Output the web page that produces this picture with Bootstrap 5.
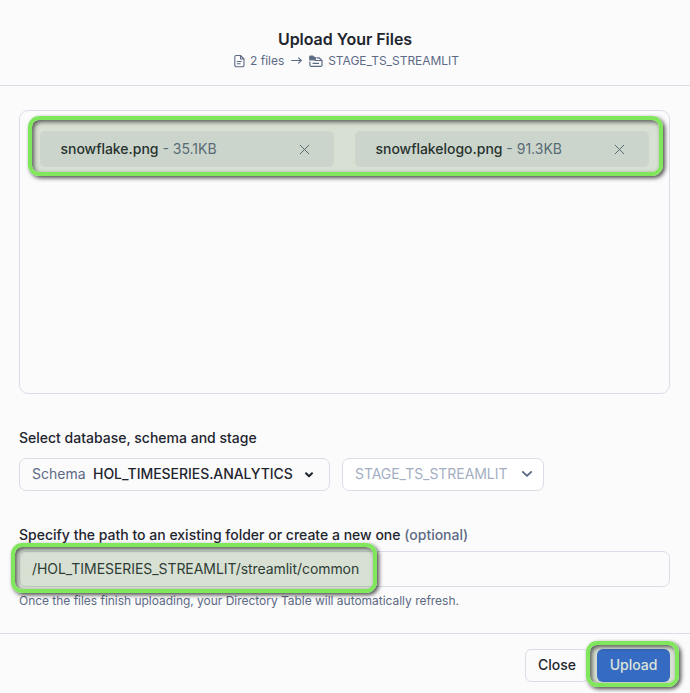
<!DOCTYPE html>
<html lang="en">
<head>
<meta charset="utf-8">
<meta name="viewport" content="width=device-width, initial-scale=1">
<title>Upload Your Files</title>
<link href="https://cdn.jsdelivr.net/npm/bootstrap@5.3.0/dist/css/bootstrap.min.css" rel="stylesheet">
<style>
body{font-family:Inter,"Liberation Sans",sans-serif;background:#fbfbfb;color:#1e252f;font-size:14px;line-height:20px;overflow:hidden}
.dialog{height:693px}
.dialog-head{height:86px;border-bottom:1px solid #dcdce6;padding-top:28px}
.dialog-head h1{font-size:16px;line-height:22px;font-weight:600;letter-spacing:-.04px}
.soft{color:#5d6a85}
.sub{font-size:12px;line-height:20px;margin-top:1px;padding-left:3px}
.files-n{margin-left:5px;letter-spacing:-.02px}
.arrow{margin:0 7px}
.stage-n{margin-left:5px;letter-spacing:-.04px}
.dialog-main{height:547px;padding:24px 20px 0 19px}
.dropzone{height:284px;border:1px solid #dcdce8;border-radius:9px;padding:20px;column-gap:21px}
.file-pill{height:36px;background:#ededf2;border-radius:5px;padding:0 24px 0 20.5px}
.fname{font-weight:500}
.file-pill .fname{letter-spacing:-.03px}
.pick{height:33px;border:1px solid #dcdce8;border-radius:7px;padding:0 14px 1px 12px;color:inherit;background:#fbfbfb}
.pick-schema{width:311px}
.pick-stage{width:202px;background:#fff;padding-right:10px}
.pick-val{margin-left:7.5px;letter-spacing:-.05px}
.stage-val{color:#a3aec3;letter-spacing:-.05px}
.picks{column-gap:12px}
.field-label{font-weight:500;line-height:20px}
.pick-label{margin-top:34px;margin-bottom:10px}
.path-label{margin-top:34px;margin-bottom:6px}
.path-field{height:36px;border:1px solid #dcdce8;border-radius:7px;background:#fbfbfb;padding:0 12px;color:#2a3038;letter-spacing:-.06px}
.hint{font-size:12px;line-height:18px;margin-top:5px;letter-spacing:-.025px}
.dialog-foot{height:60px;border-top:1px solid #dcdce6;padding:15px 20px 0 0}
.foot-btn{height:33px;border-radius:6px;font-size:14px;line-height:20px;font-weight:500;padding:0 0 1px}
.foot-close{width:64px;border:1px solid #dcdce8;color:#1e252f;background:#fbfbfb}
.foot-upload{width:73px;background:#336be6;color:#fff}
.upload-wrap{margin-left:8px}
.marker{position:absolute;z-index:5;border:4px solid #80e65c;border-radius:11px;background:rgba(62,112,42,.19);background-clip:padding-box;box-shadow:2px 2px 4px rgba(0,0,0,.7),inset 2px 2px 4px rgba(0,0,0,.6);pointer-events:none}
.marker-files{left:8px;top:5px;width:635px;height:60px}
.marker-path{left:-8px;top:-8px;width:366px;height:50px}
.marker-upload{left:-11px;top:-8px;width:93px;height:46px}
</style>
<script src="https://cdn.jsdelivr.net/npm/bootstrap@5.3.0/dist/js/bootstrap.bundle.min.js"></script>
</head>
<body>
<div class="dialog d-flex flex-column">
  <header class="dialog-head d-flex flex-column align-items-center">
    <h1 class="mb-0">Upload Your Files</h1>
    <div class="sub soft d-flex align-items-center">
      <svg width="11" height="14" viewBox="0.5 0 11 14" fill="none" stroke="currentColor" stroke-width="1.1" stroke-linejoin="round" stroke-linecap="round"><path d="M2.8 1.5H7L10.5 5v6.2a1.5 1.5 0 0 1-1.5 1.5H2.8a1.5 1.5 0 0 1-1.5-1.5V3a1.5 1.5 0 0 1 1.5-1.5zM7 1.5V5h3.5M3.7 7.5h4M3.7 9.8h3"/></svg>
      <span class="files-n">2 files</span>
      <svg class="arrow" width="11" height="10" viewBox="0 0 11 10" fill="none" stroke="currentColor" stroke-width="1.1" stroke-linecap="round" stroke-linejoin="round"><path d="M.6 4.5h9.7M7.6 1.9l2.7 2.6-2.7 2.6"/></svg>
      <svg width="14" height="13" viewBox="0 0 15 14" fill="none" stroke="currentColor" stroke-width="1.3" stroke-linejoin="round" stroke-linecap="round"><path d="M.8 5.2V2c0-.6.3-.9.8-.9h2.2L5 2.4h1.7v2.8z" fill="currentColor"/><path d="M8.5 3.2h2.6L14 6.1v4.6a1.5 1.5 0 0 1-1.5 1.5H2.4A1.5 1.5 0 0 1 .9 10.7V7.6M6.8 5.9H14M4.3 9h6"/></svg>
      <span class="stage-n">STAGE_TS_STREAMLIT</span>
    </div>
  </header>

  <main class="dialog-main">
    <div class="dropzone position-relative d-flex align-items-start">
      <div class="file-pill d-flex align-items-center justify-content-between flex-fill w-50">
        <span><span class="fname">snowflake.png</span><span class="soft"> - 35.1KB</span></span>
        <svg class="soft" width="11" height="11" viewBox="0 0 11 11" stroke="currentColor" stroke-width="1" stroke-linecap="round"><path d="M1.2 1.2l8.6 8.6M9.8 1.2 1.2 9.8"/></svg>
      </div>
      <div class="file-pill d-flex align-items-center justify-content-between flex-fill w-50">
        <span><span class="fname">snowflakelogo.png</span><span class="soft"> - 91.3KB</span></span>
        <svg class="soft" width="11" height="11" viewBox="0 0 11 11" stroke="currentColor" stroke-width="1" stroke-linecap="round"><path d="M1.2 1.2l8.6 8.6M9.8 1.2 1.2 9.8"/></svg>
      </div>
      <div class="marker marker-files"></div>
    </div>

    <div class="field-label pick-label">Select database, schema and stage</div>
    <div class="picks d-flex">
      <button type="button" class="pick pick-schema d-flex align-items-center">
        <span class="soft">Schema</span><span class="fname pick-val">HOL_TIMESERIES.ANALYTICS</span>
        <svg class="ms-auto" width="12" height="10" viewBox="0 0 12 10" fill="none" stroke="currentColor" stroke-width="2" stroke-linecap="round" stroke-linejoin="round"><path d="M3 4.3l3 3 3-3"/></svg>
      </button>
      <button type="button" class="pick pick-stage d-flex align-items-center" disabled>
        <span class="stage-val">STAGE_TS_STREAMLIT</span>
        <svg class="ms-auto soft" width="12" height="10" viewBox="0 0 12 10" fill="none" stroke="currentColor" stroke-width="1.9" stroke-linecap="round" stroke-linejoin="round"><path d="M1.8 2.9l4.2 4 4.2-4"/></svg>
      </button>
    </div>

    <div class="field-label path-label">Specify the path to an existing folder or create a new one <span class="soft">(optional)</span></div>
    <div class="position-relative">
      <div class="path-field d-flex align-items-center"><span>/HOL_TIMESERIES_STREAMLIT/streamlit/common</span></div>
      <div class="marker marker-path"></div>
    </div>
    <div class="hint soft">Once the files finish uploading, your Directory Table will automatically refresh.</div>
  </main>

  <footer class="dialog-foot d-flex justify-content-end align-items-start">
    <button type="button" class="btn foot-btn foot-close">Close</button>
    <div class="upload-wrap position-relative">
      <button type="button" class="btn foot-btn foot-upload">Upload</button>
      <div class="marker marker-upload"></div>
    </div>
  </footer>
</div>
</body>
</html>
